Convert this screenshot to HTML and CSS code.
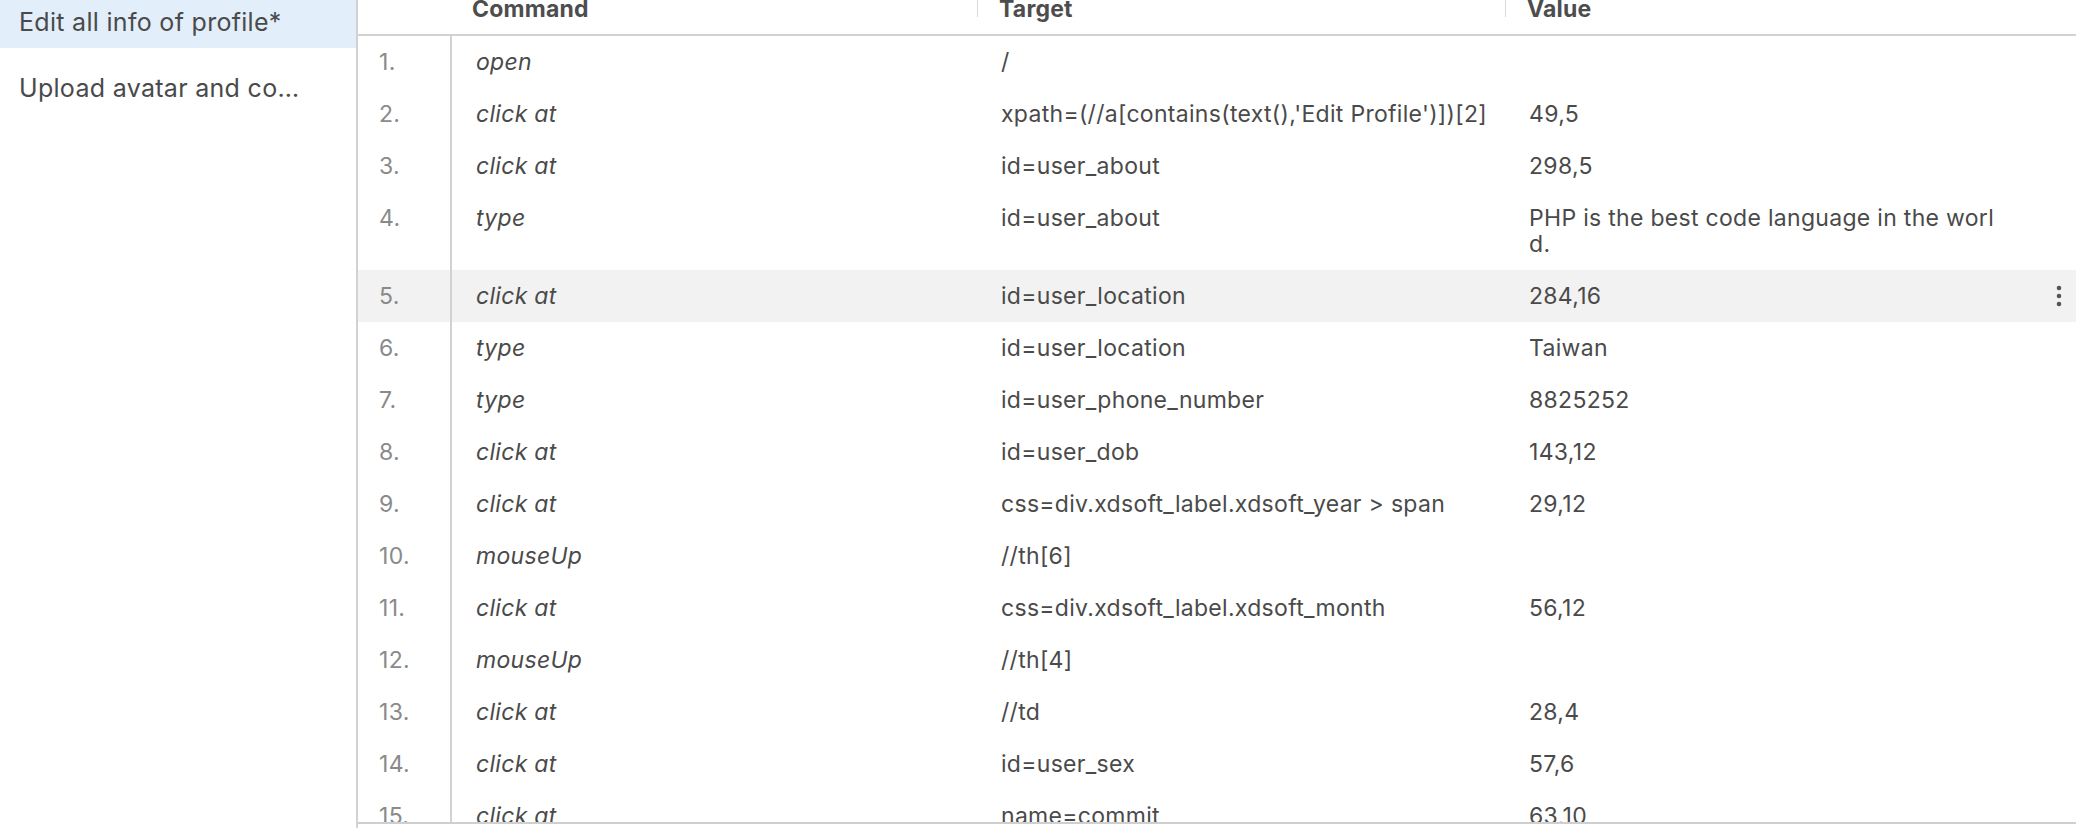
FILE: index.html
```html
<!DOCTYPE html>
<html lang="en">
<head>
<meta charset="utf-8">
<title>Test editor</title>
<link rel="stylesheet" href="styles.css">
</head>
<body>
<div class="app">
  <aside class="sidebar">
    <div class="test-item is-selected">Edit all info of profile*</div>
    <div class="test-item">Upload avatar and co…</div>
  </aside>
  <main class="editor">
    <div class="table-view">
      <div class="thead">
        <div class="th th-num"></div>
        <div class="th th-first">Command</div>
        <div class="th">Target</div>
        <div class="th">Value</div>
        <div class="th th-menu"></div>
      </div>
      <div class="tbody">
        <div class="row"><div class="cell num">1.</div><div class="cell cmd">open</div><div class="cell">/</div><div class="cell val"></div><div class="cell menu"></div></div>
        <div class="row"><div class="cell num">2.</div><div class="cell cmd">click at</div><div class="cell">xpath=(//a[contains(text(),'Edit Profile')])[2]</div><div class="cell val">49,5</div><div class="cell menu"></div></div>
        <div class="row"><div class="cell num">3.</div><div class="cell cmd">click at</div><div class="cell">id=user_about</div><div class="cell val">298,5</div><div class="cell menu"></div></div>
        <div class="row"><div class="cell num">4.</div><div class="cell cmd">type</div><div class="cell">id=user_about</div><div class="cell val">PHP is the best code language in the world.</div><div class="cell menu"></div></div>
        <div class="row is-hover"><div class="cell num">5.</div><div class="cell cmd">click at</div><div class="cell">id=user_location</div><div class="cell val">284,16</div><div class="cell menu"><svg class="kebab" width="6" height="22" viewBox="0 0 6 22"><circle cx="3" cy="3" r="2.3"/><circle cx="3" cy="11" r="2.3"/><circle cx="3" cy="19" r="2.3"/></svg></div></div>
        <div class="row"><div class="cell num">6.</div><div class="cell cmd">type</div><div class="cell">id=user_location</div><div class="cell val">Taiwan</div><div class="cell menu"></div></div>
        <div class="row"><div class="cell num">7.</div><div class="cell cmd">type</div><div class="cell">id=user_phone_number</div><div class="cell val">8825252</div><div class="cell menu"></div></div>
        <div class="row"><div class="cell num">8.</div><div class="cell cmd">click at</div><div class="cell">id=user_dob</div><div class="cell val">143,12</div><div class="cell menu"></div></div>
        <div class="row"><div class="cell num">9.</div><div class="cell cmd">click at</div><div class="cell">css=div.xdsoft_label.xdsoft_year &gt; span</div><div class="cell val">29,12</div><div class="cell menu"></div></div>
        <div class="row"><div class="cell num">10.</div><div class="cell cmd">mouseUp</div><div class="cell">//th[6]</div><div class="cell val"></div><div class="cell menu"></div></div>
        <div class="row"><div class="cell num">11.</div><div class="cell cmd">click at</div><div class="cell">css=div.xdsoft_label.xdsoft_month</div><div class="cell val">56,12</div><div class="cell menu"></div></div>
        <div class="row"><div class="cell num">12.</div><div class="cell cmd">mouseUp</div><div class="cell">//th[4]</div><div class="cell val"></div><div class="cell menu"></div></div>
        <div class="row"><div class="cell num">13.</div><div class="cell cmd">click at</div><div class="cell">//td</div><div class="cell val">28,4</div><div class="cell menu"></div></div>
        <div class="row"><div class="cell num">14.</div><div class="cell cmd">click at</div><div class="cell">id=user_sex</div><div class="cell val">57,6</div><div class="cell menu"></div></div>
        <div class="row"><div class="cell num">15.</div><div class="cell cmd">click at</div><div class="cell">name=commit</div><div class="cell val">63,10</div><div class="cell menu"></div></div>
      </div>
    </div>
    <div class="bottom-edge"></div>
  </main>
</div>
</body>
</html>
```
FILE: styles.css
```css
html, body {
  margin: 0;
  padding: 0;
  background: #ffffff;
}
body {
  font-family: Inter, "Noto Sans", "Liberation Sans", sans-serif;
  color: #4a4a4a;
  width: 2076px;
  height: 828px;
  overflow: hidden;
}
.app {
  display: flex;
  height: 828px;
}
.sidebar {
  width: 356px;
  flex: 0 0 356px;
  border-right: 2px solid #d2d2d2;
  display: flex;
  flex-direction: column;
  gap: 18px;
}
.test-item {
  height: 48px;
  display: flex;
  align-items: center;
  padding-left: 19px;
  padding-bottom: 4px;
  box-sizing: border-box;
  font-size: 25px;
  letter-spacing: 0.3px;
  white-space: nowrap;
  color: #4a4a4a;
}
.test-item.is-selected {
  background: #e2eefa;
}
.editor {
  flex: 1;
  display: flex;
  flex-direction: column;
  min-width: 0;
}
.table-view {
  flex: 1;
  overflow: hidden;
}
.thead, .row {
  display: grid;
  grid-template-columns: 94px 525px 528px 523px 1fr;
}
.thead {
  height: 34px;
  border-bottom: 2px solid #d2d2d2;
  align-items: start;
}
.th {
  height: 18px;
  padding-left: 21px;
  font-size: 23px;
  font-weight: 700;
  line-height: 20px;
  letter-spacing: 0.2px;
  color: #4d4d4d;
  border-left: 1px solid #dadada;
  margin-top: -1px;
  white-space: nowrap;
}
.th-num, .th-menu {
  border-left: none;
}
.th-first {
  border-left: none;
  padding-left: 20px;
}
.row.is-hover {
  background: #f2f2f2;
}
.cell {
  padding: 13px 0 13px 24px;
  font-size: 23px;
  line-height: 26px;
  letter-spacing: 0.3px;
  white-space: nowrap;
  min-width: 0;
}
.cell.num {
  padding-left: 21px;
  color: #8a8a8a;
  border-right: 2px solid #d2d2d2;
}
.cell.cmd {
  padding-left: 24px;
  font-style: italic;
}
.cell.val {
  white-space: normal;
  word-break: break-all;
  padding-right: 27px;
}
.cell.menu {
  padding-left: 28px;
  display: flex;
  align-items: center;
}
.kebab {
  fill: #555555;
}
.bottom-edge {
  height: 4px;
  border-top: 2px solid #cfcfcf;
}
```
